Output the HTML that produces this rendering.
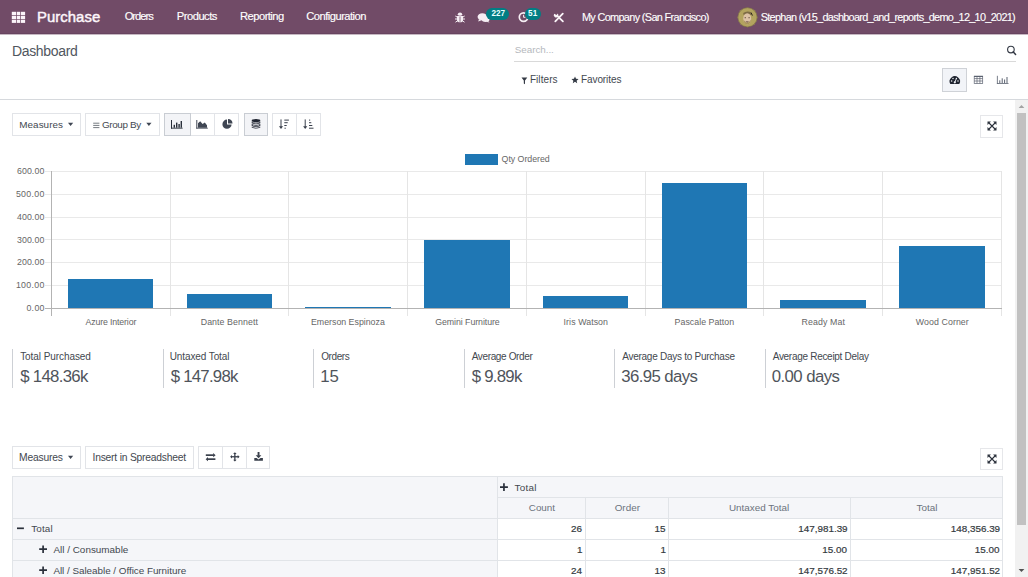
<!DOCTYPE html>
<html><head><meta charset="utf-8"><title>Purchase - Dashboard</title>
<style>
html,body{margin:0;padding:0;}
body{width:1028px;height:577px;overflow:hidden;position:relative;background:#fff;font-family:"Liberation Sans",sans-serif;}
.t{position:absolute;white-space:nowrap;}
.b{position:absolute;box-sizing:border-box;}
svg{position:absolute;overflow:visible;}
</style></head><body>
<div class="b" style="left:0px;top:0px;width:1028px;height:33px;background:#714b67"></div>
<div class="b" style="left:0px;top:33px;width:1028px;height:1px;background:#684460"></div>
<div class="b" style="left:0px;top:34px;width:1028px;height:1px;background:#c6b8c2"></div>
<svg style="left:0;top:0" width="40" height="34"><g fill="#fbf4f9"><rect x="11.8" y="11.8" width="4.3" height="3.3"/><rect x="16.8" y="11.8" width="3.4" height="3.3"/><rect x="20.9" y="11.8" width="4.2" height="3.3"/><rect x="11.8" y="15.8" width="4.3" height="3.5"/><rect x="16.8" y="15.8" width="3.4" height="3.5"/><rect x="20.9" y="15.8" width="4.2" height="3.5"/><rect x="11.8" y="20" width="4.3" height="2.9"/><rect x="16.8" y="20" width="3.4" height="2.9"/><rect x="20.9" y="20" width="4.2" height="2.9"/></g></svg>
<svg style="left:454px;top:11px" width="12" height="13" viewBox="0 0 12 13"><g fill="#f6eef4" stroke="#f6eef4"><ellipse cx="6" cy="3.2" rx="2.2" ry="1.6" stroke="none"/><path d="M3 5 H9 V9.5 Q9 11.3 6 11.3 Q3 11.3 3 9.5 Z" stroke="none"/><path d="M3 6 L1.3 5 M3 8 L1 8 M3.3 10 L1.5 11.2 M9 6 L10.7 5 M9 8 L11 8 M8.7 10 L10.5 11.2" stroke-width="1" fill="none"/></g><path d="M6 5.5 V10.8" stroke="#714b67" stroke-width="0.8"/></svg>
<svg style="left:477px;top:11px" width="14" height="13" viewBox="0 0 14 13"><g fill="#f6eef4"><ellipse cx="5.3" cy="5.8" rx="4.7" ry="3.6"/><path d="M2 8 L1.2 10.6 L4.6 9.2 Z"/><ellipse cx="8.6" cy="8" rx="4" ry="3" /><path d="M11 10 L12.6 11.4 L9.2 10.8 Z"/></g></svg>
<div class="b" style="left:486.2px;top:7.6px;width:22.7px;height:12px;border-radius:6px;background:#017e84"></div>
<svg style="left:517px;top:10px" width="14" height="14" viewBox="0 0 14 14"><circle cx="6.6" cy="7.1" r="4.3" fill="none" stroke="#f6eef4" stroke-width="1.7"/><path d="M6.6 4.8 V7.3 H8.4" fill="none" stroke="#f6eef4" stroke-width="1"/></svg>
<div class="b" style="left:524.6px;top:7.5px;width:16.9px;height:12.2px;border-radius:6px;background:#017e84"></div>
<svg style="left:553px;top:12px" width="12" height="11" viewBox="0 0 12 11"><g stroke="#fbf5f9" stroke-width="1.8" stroke-linecap="round"><path d="M2.3 9.3 L9.8 1.6"/><path d="M4 3.6 L9.9 9.4"/></g><path d="M1.2 1.8 A2.3 2.3 0 1 0 4.6 1.4 L3.8 2.9 L2.6 2.4 Z" fill="#fbf5f9"/></svg>
<svg style="left:737px;top:7px" width="21" height="21" viewBox="0 0 21 21"><circle cx="10.5" cy="10.3" r="9.9" fill="#b3a45f"/><circle cx="10.5" cy="10.3" r="9.6" fill="none" stroke="#6e6340" stroke-width="0.8" opacity="0.7"/><path d="M6.2 6 Q10 3.2 14.6 5.6 L14.2 8 Q10.3 6.3 6.6 8 Z" fill="#7d6b45"/><ellipse cx="10.2" cy="11.8" rx="4" ry="5.6" fill="#dcc2a6"/><path d="M6.4 12.5 Q10.2 19 14 12.5 Q13.6 17.2 10.2 17.6 Q6.8 17.2 6.4 12.5Z" fill="#a8945c"/><rect x="7.6" y="10.3" width="1.4" height="0.9" fill="#5d4a3a"/><rect x="11.4" y="10.3" width="1.4" height="0.9" fill="#5d4a3a"/><path d="M8.3 14.6 Q10.2 16.2 12.1 14.6 Z" fill="#4a3028"/><path d="M14.2 5.8 L15.4 8.6" stroke="#2b2420" stroke-width="1"/></svg>
<div class="b" style="left:0px;top:99px;width:1028px;height:1px;background:#d6d9dd"></div>
<div class="b" style="left:514px;top:61px;width:502px;height:1px;background:#d9d9d9"></div>
<svg style="left:1005px;top:44px" width="13" height="13" viewBox="0 0 13 13"><circle cx="5.9" cy="5.5" r="3.3" fill="none" stroke="#343a45" stroke-width="1.15"/><path d="M8.3 7.9 L10.6 10.4" stroke="#343a45" stroke-width="1.5" stroke-linecap="round"/></svg>
<svg style="left:521px;top:77px" width="7" height="8" viewBox="0 0 7 8"><path d="M0.5 0.5 H6.3 L4 3.4 V7.3 L2.8 6.4 V3.4 Z" fill="#343a45"/></svg>
<svg style="left:571px;top:76px" width="8" height="8" viewBox="0 0 24 24"><path d="M12 1.5 L15.1 8.4 L22.6 9.1 L16.9 14.1 L18.6 21.5 L12 17.6 L5.4 21.5 L7.1 14.1 L1.4 9.1 L8.9 8.4 Z" fill="#343a45"/></svg>
<div class="b" style="left:942px;top:68px;width:25px;height:24px;background:#f2f4f8;border:1px solid #cfd2d7"></div>
<svg style="left:949px;top:76px" width="12" height="9" viewBox="0 0 12 9"><path d="M1.3 8 A5.2 5.2 0 1 1 10.3 8 Z" fill="#1f2430"/><g fill="#f2f4f8"><circle cx="2.6" cy="5" r="0.75"/><circle cx="4" cy="2.4" r="0.75"/><circle cx="7.4" cy="2.4" r="0.75"/><circle cx="9" cy="5" r="0.75"/><circle cx="5.8" cy="6.3" r="1.1"/></g><path d="M5.8 6.3 L7.2 3" stroke="#f2f4f8" stroke-width="0.9"/></svg>
<svg style="left:973px;top:75px" width="11" height="10" viewBox="0 0 11 10"><g fill="none" stroke="#5b6270" stroke-width="0.7"><rect x="1.2" y="1.2" width="8.5" height="7.2"/><path d="M1.2 3.6 H9.7 M1.2 6 H9.7 M4 1.2 V8.4 M6.9 1.2 V8.4"/></g><rect x="1" y="0.9" width="8.9" height="1.1" fill="#5b6270"/></svg>
<svg style="left:996px;top:75px" width="14" height="10" viewBox="0 0 14 10"><g fill="#5b6270"><rect x="0.9" y="0.8" width="0.8" height="8"/><rect x="0.9" y="8" width="11.6" height="0.8"/><rect x="3.3" y="5.3" width="1" height="2.7"/><rect x="5.7" y="3.3" width="1" height="4.7"/><rect x="8.1" y="4.5" width="1" height="3.5"/><rect x="10.5" y="2" width="1" height="6"/></g></svg>
<div class="b" style="left:1015px;top:100px;width:13px;height:477px;background:#f1f1f1"></div>
<div class="b" style="left:1017px;top:113px;width:9px;height:412px;background:#c1c1c1"></div>
<svg style="left:1015px;top:100px" width="13" height="12" viewBox="0 0 13 12"><path d="M3.6 8 L6.5 5 L9.4 8 Z" fill="#a3a3a3"/></svg>
<svg style="left:1015px;top:565px" width="13" height="12" viewBox="0 0 13 12"><path d="M3.6 4 L6.5 7 L9.4 4 Z" fill="#505050"/></svg>
<div class="b" style="left:12px;top:113px;width:69px;height:23px;background:#fff;border:1px solid #e2e4e8"></div>
<svg style="left:67px;top:122px" width="8" height="5" viewBox="0 0 8 5"><path d="M1 0.8 H6.2 L3.6 3.9 Z" fill="#3f4653"/></svg>
<div class="b" style="left:85px;top:113px;width:75px;height:23px;background:#fff;border:1px solid #e2e4e8"></div>
<svg style="left:92px;top:121px" width="9" height="9" viewBox="0 0 9 9"><path d="M1.2 2.2 H7.4 M1.2 4.4 H7.4 M1.2 6.6 H7.4" stroke="#5d636c" stroke-width="0.85"/></svg>
<svg style="left:145px;top:122px" width="8" height="5" viewBox="0 0 8 5"><path d="M1.3 0.8 H6.5 L3.9 3.9 Z" fill="#3f4653"/></svg>
<div class="b" style="left:164px;top:113px;width:75px;height:23px;background:#fff;border:1px solid #e2e4e8"></div>
<div class="b" style="left:164px;top:113px;width:27px;height:23px;background:#f3f4f7;border:1px solid #c9cdd3"></div>
<div class="b" style="left:214px;top:114px;width:1px;height:21px;background:#e2e4e8"></div>
<div class="b" style="left:244px;top:113px;width:24px;height:23px;background:#f3f4f7;border:1px solid #c9cdd3"></div>
<div class="b" style="left:272px;top:113px;width:49px;height:23px;background:#fff;border:1px solid #e2e4e8"></div>
<div class="b" style="left:296px;top:114px;width:1px;height:21px;background:#e2e4e8"></div>
<svg style="left:170px;top:119px" width="14" height="11" viewBox="0 0 14 11"><g fill="#2a303b"><rect x="1" y="1" width="1" height="8.6"/><rect x="1" y="8.7" width="11.6" height="0.9"/><rect x="3.6" y="5.8" width="1.4" height="2.9"/><rect x="6" y="3.6" width="1.4" height="5.1"/><rect x="8.4" y="5" width="1.4" height="3.7"/><rect x="10.6" y="2" width="1.4" height="6.7"/></g></svg>
<svg style="left:195px;top:119px" width="14" height="11" viewBox="0 0 14 11"><g fill="#3f4653"><rect x="1.3" y="1" width="1" height="8.6"/><rect x="1.3" y="8.7" width="11.5" height="0.9"/><path d="M3 8.7 V4.2 L5.2 2.2 L7.6 5 L9.8 3.6 L12 6.3 V8.7 Z"/></g></svg>
<svg style="left:221px;top:118px" width="13" height="12" viewBox="0 0 13 12"><path d="M6 1.6 A4.6 4.6 0 1 0 10.6 6.4 H6 Z" fill="#3f4653"/><path d="M7 1 A4.6 4.6 0 0 1 11.5 5.4 H7 Z" fill="#3f4653"/></svg>
<svg style="left:250px;top:118px" width="12" height="13" viewBox="0 0 12 13"><g fill="#1f2430"><ellipse cx="6" cy="2.6" rx="4.3" ry="1.5"/><path d="M1.7 3.4 Q6 5.4 10.3 3.4 V5.3 Q6 7.3 1.7 5.3 Z"/><path d="M1.7 6.1 Q6 8.1 10.3 6.1 V8 Q6 10 1.7 8 Z"/><path d="M1.7 8.8 Q6 10.8 10.3 8.8 V9.6 Q6 11.6 1.7 9.6 Z"/></g><g fill="none" stroke="#f3f4f7" stroke-width="0.6"><path d="M2.6 4.6 Q6 6.2 9.4 4.6"/><path d="M2.6 7.3 Q6 8.9 9.4 7.3"/></g></svg>
<svg style="left:278px;top:118px" width="13" height="12" viewBox="0 0 13 12"><g fill="#3a404c"><rect x="2.5" y="1.4" width="1" height="8"/><path d="M0.9 8.2 H5.1 L3 11 Z"/><rect x="6.3" y="1.6" width="4.6" height="1"/><rect x="6.3" y="4.2" width="3.4" height="1"/><rect x="6.3" y="7" width="2.4" height="1"/><rect x="6.5" y="9.7" width="1.3" height="1"/></g></svg>
<svg style="left:302px;top:118px" width="13" height="12" viewBox="0 0 13 12"><g fill="#3a404c"><rect x="2.7" y="1.4" width="1" height="8"/><path d="M1.1 8.2 H5.3 L3.2 11 Z"/><rect x="7" y="1.6" width="1.2" height="1"/><rect x="7" y="4.2" width="2.3" height="1"/><rect x="7" y="7" width="3.3" height="1"/><rect x="7" y="9.7" width="4.5" height="1"/></g></svg>
<div class="b" style="left:980px;top:115px;width:23px;height:23px;background:#fff;border:1px solid #e6e7ea"></div>
<svg style="left:985.6px;top:119.9px" width="12" height="12" viewBox="0 0 12 12"><g stroke="#2a303b" stroke-width="1.1" fill="none"><path d="M3 3 L9 9 M9 3 L3 9"/></g><g fill="#2a303b"><path d="M1.5 1.5 H4.9 L1.5 4.9 Z"/><path d="M10.5 1.5 H7.1 L10.5 4.9 Z"/><path d="M1.5 10.5 H4.9 L1.5 7.1 Z"/><path d="M10.5 10.5 H7.1 L10.5 7.1 Z"/></g></svg>
<svg style="left:0;top:0" width="1015" height="340" viewBox="0 0 1015 340" shape-rendering="crispEdges"><rect x="465" y="153.6" width="32.5" height="11.4" fill="#1f77b4"/><rect x="44.5" y="170.80" width="957" height="1" fill="#e9e9e9"/><rect x="44.5" y="193.65" width="957" height="1" fill="#e9e9e9"/><rect x="44.5" y="216.50" width="957" height="1" fill="#e9e9e9"/><rect x="44.5" y="239.35" width="957" height="1" fill="#e9e9e9"/><rect x="44.5" y="262.20" width="957" height="1" fill="#e9e9e9"/><rect x="44.5" y="285.05" width="957" height="1" fill="#e9e9e9"/><rect x="169.55" y="170.8" width="1" height="145" fill="#e5e5e5"/><rect x="288.30" y="170.8" width="1" height="145" fill="#e5e5e5"/><rect x="407.05" y="170.8" width="1" height="145" fill="#e5e5e5"/><rect x="525.80" y="170.8" width="1" height="145" fill="#e5e5e5"/><rect x="644.55" y="170.8" width="1" height="145" fill="#e5e5e5"/><rect x="763.30" y="170.8" width="1" height="145" fill="#e5e5e5"/><rect x="882.05" y="170.8" width="1" height="145" fill="#e5e5e5"/><rect x="1000.80" y="170.8" width="1" height="145" fill="#e5e5e5"/><rect x="44.5" y="307.9" width="957" height="1" fill="#b3b3b3"/><rect x="50.8" y="170.8" width="1" height="145" fill="#b3b3b3"/><rect x="67.90" y="278.70" width="85.5" height="29.70" fill="#1f77b4"/><rect x="186.65" y="293.90" width="85.5" height="14.50" fill="#1f77b4"/><rect x="305.40" y="306.80" width="85.5" height="1.60" fill="#1f77b4"/><rect x="424.15" y="239.60" width="85.5" height="68.80" fill="#1f77b4"/><rect x="542.90" y="295.70" width="85.5" height="12.70" fill="#1f77b4"/><rect x="661.65" y="182.60" width="85.5" height="125.80" fill="#1f77b4"/><rect x="780.40" y="299.90" width="85.5" height="8.50" fill="#1f77b4"/><rect x="899.15" y="246.30" width="85.5" height="62.10" fill="#1f77b4"/></svg>
<div class="b" style="left:12px;top:349px;width:1px;height:39px;background:#cdd0d5"></div>
<div class="b" style="left:163px;top:349px;width:1px;height:39px;background:#cdd0d5"></div>
<div class="b" style="left:313px;top:349px;width:1px;height:39px;background:#cdd0d5"></div>
<div class="b" style="left:464px;top:349px;width:1px;height:39px;background:#cdd0d5"></div>
<div class="b" style="left:614px;top:349px;width:1px;height:39px;background:#cdd0d5"></div>
<div class="b" style="left:765px;top:349px;width:1px;height:39px;background:#cdd0d5"></div>
<div class="b" style="left:12px;top:446px;width:69px;height:23px;background:#fff;border:1px solid #e2e4e8"></div>
<svg style="left:67px;top:455px" width="8" height="5" viewBox="0 0 8 5"><path d="M1 0.8 H6.2 L3.6 3.9 Z" fill="#3f4653"/></svg>
<div class="b" style="left:85px;top:446px;width:109px;height:23px;background:#fff;border:1px solid #e2e4e8"></div>
<div class="b" style="left:198px;top:446px;width:72px;height:23px;background:#fff;border:1px solid #e2e4e8"></div>
<div class="b" style="left:222px;top:447px;width:1px;height:21px;background:#e2e4e8"></div>
<div class="b" style="left:246px;top:447px;width:1px;height:21px;background:#e2e4e8"></div>
<svg style="left:204px;top:451px" width="13" height="11" viewBox="0 0 13 11"><g fill="#3a404c"><rect x="1.8" y="3.3" width="8" height="1.7"/><path d="M9.2 2 L11.6 4.15 L9.2 6.3 Z"/><rect x="3.4" y="7.3" width="8" height="1.7"/><path d="M4 6 L1.6 8.15 L4 10.3 Z"/></g></svg>
<svg style="left:229px;top:451px" width="12" height="12" viewBox="0 0 12 12"><g fill="#3a404c"><rect x="5.2" y="2" width="1.3" height="7.5"/><rect x="2" y="5.1" width="7.5" height="1.3"/><path d="M5.85 1.2 L7.6 3 H4.1 Z"/><path d="M5.85 10.6 L7.6 8.7 H4.1 Z"/><path d="M1.1 5.75 L3 4 V7.5 Z"/><path d="M10.6 5.75 L8.7 4 V7.5 Z"/></g></svg>
<svg style="left:253px;top:451px" width="12" height="12" viewBox="0 0 12 12"><g fill="#3a404c"><rect x="4.6" y="1" width="1.9" height="3.8"/><path d="M2.7 4.3 H8.4 L5.55 7.3 Z"/><path d="M1.3 6.9 H3.6 L5.55 8.6 L7.5 6.9 H9.9 V9.7 H1.3 Z"/></g></svg>
<div class="b" style="left:980px;top:448px;width:23px;height:22px;background:#fff;border:1px solid #e6e7ea"></div>
<svg style="left:985.6px;top:452.9px" width="12" height="12" viewBox="0 0 12 12"><g stroke="#2a303b" stroke-width="1.1" fill="none"><path d="M3 3 L9 9 M9 3 L3 9"/></g><g fill="#2a303b"><path d="M1.5 1.5 H4.9 L1.5 4.9 Z"/><path d="M10.5 1.5 H7.1 L10.5 4.9 Z"/><path d="M1.5 10.5 H4.9 L1.5 7.1 Z"/><path d="M10.5 10.5 H7.1 L10.5 7.1 Z"/></g></svg>
<div class="b" style="left:12px;top:476px;width:486px;height:43px;background:#f5f6f9;border:1px solid #e1e4e8"></div>
<div class="b" style="left:497px;top:476px;width:506px;height:22px;background:#f5f6f9;border:1px solid #e1e4e8"></div>
<div class="b" style="left:497px;top:497px;width:89px;height:22px;background:#f5f6f9;border:1px solid #e1e4e8"></div>
<div class="b" style="left:585px;top:497px;width:84px;height:22px;background:#f5f6f9;border:1px solid #e1e4e8"></div>
<div class="b" style="left:668px;top:497px;width:183px;height:22px;background:#f5f6f9;border:1px solid #e1e4e8"></div>
<div class="b" style="left:850px;top:497px;width:153px;height:22px;background:#f5f6f9;border:1px solid #e1e4e8"></div>
<div class="b" style="left:12px;top:518px;width:486px;height:22px;background:#f5f6f9;border:1px solid #e1e4e8"></div>
<div class="b" style="left:497px;top:518px;width:89px;height:22px;background:#fff;border:1px solid #e1e4e8"></div>
<div class="b" style="left:585px;top:518px;width:84px;height:22px;background:#fff;border:1px solid #e1e4e8"></div>
<div class="b" style="left:668px;top:518px;width:183px;height:22px;background:#fff;border:1px solid #e1e4e8"></div>
<div class="b" style="left:850px;top:518px;width:153px;height:22px;background:#fff;border:1px solid #e1e4e8"></div>
<div class="b" style="left:12px;top:539px;width:486px;height:22px;background:#f5f6f9;border:1px solid #e1e4e8"></div>
<div class="b" style="left:497px;top:539px;width:89px;height:22px;background:#fff;border:1px solid #e1e4e8"></div>
<div class="b" style="left:585px;top:539px;width:84px;height:22px;background:#fff;border:1px solid #e1e4e8"></div>
<div class="b" style="left:668px;top:539px;width:183px;height:22px;background:#fff;border:1px solid #e1e4e8"></div>
<div class="b" style="left:850px;top:539px;width:153px;height:22px;background:#fff;border:1px solid #e1e4e8"></div>
<div class="b" style="left:12px;top:560px;width:486px;height:22px;background:#f5f6f9;border:1px solid #e1e4e8"></div>
<div class="b" style="left:497px;top:560px;width:89px;height:22px;background:#fff;border:1px solid #e1e4e8"></div>
<div class="b" style="left:585px;top:560px;width:84px;height:22px;background:#fff;border:1px solid #e1e4e8"></div>
<div class="b" style="left:668px;top:560px;width:183px;height:22px;background:#fff;border:1px solid #e1e4e8"></div>
<div class="b" style="left:850px;top:560px;width:153px;height:22px;background:#fff;border:1px solid #e1e4e8"></div>
<svg style="left:498px;top:481px" width="12" height="12" viewBox="0 0 12 12"><path d="M2 6.1 H9.9 M5.95 2.2 V10" stroke="#2a303b" stroke-width="1.7"/></svg>
<svg style="left:15px;top:522px" width="12" height="12" viewBox="0 0 12 12"><path d="M2 6.3 H8.9" stroke="#2a303b" stroke-width="1.7"/></svg>
<svg style="left:37px;top:543px" width="12" height="12" viewBox="0 0 12 12"><path d="M2.2 6.2 H10 M6.1 2.5 V9.9" stroke="#2a303b" stroke-width="1.7"/></svg>
<svg style="left:37px;top:564px" width="12" height="12" viewBox="0 0 12 12"><path d="M2.2 6.2 H10 M6.1 2.5 V9.9" stroke="#2a303b" stroke-width="1.7"/></svg>
<div class="t" style="left:37px;top:10px;font-size:14.9px;line-height:14.9px;color:#fdf6fb;letter-spacing:0.04px;-webkit-text-stroke:0.45px #fdf6fb">Purchase</div>
<div class="t" style="left:124.7px;top:11px;font-size:11.2px;line-height:11.2px;color:#ffffff;letter-spacing:-1.02px;-webkit-text-stroke:0.15px #ffffff">Orders</div>
<div class="t" style="left:176.8px;top:11px;font-size:11.2px;line-height:11.2px;color:#ffffff;letter-spacing:-0.51px;-webkit-text-stroke:0.15px #ffffff">Products</div>
<div class="t" style="left:240.1px;top:11px;font-size:11.2px;line-height:11.2px;color:#ffffff;letter-spacing:-0.55px;-webkit-text-stroke:0.15px #ffffff">Reporting</div>
<div class="t" style="left:306.3px;top:11px;font-size:11.2px;line-height:11.2px;color:#ffffff;letter-spacing:-0.53px;-webkit-text-stroke:0.15px #ffffff">Configuration</div>
<div class="t" style="left:581.9px;top:12px;font-size:10.9px;line-height:10.9px;color:#ffffff;letter-spacing:-0.66px;-webkit-text-stroke:0.12px #ffffff">My Company (San Francisco)</div>
<div class="t" style="left:760.7px;top:12px;font-size:10.9px;line-height:10.9px;color:#ffffff;letter-spacing:-0.7px;-webkit-text-stroke:0.12px #ffffff">Stephan (v15_dashboard_and_reports_demo_12_10_2021)</div>
<div class="t" style="left:491.4px;top:10px;font-size:8.2px;line-height:8.2px;color:#e8ffff;font-weight:700;letter-spacing:-0.05px">227</div>
<div class="t" style="left:528.1px;top:10px;font-size:8.2px;line-height:8.2px;color:#e8ffff;font-weight:700">51</div>
<div class="t" style="left:11.9px;top:44px;font-size:14px;line-height:14px;color:#50565e;letter-spacing:-0.32px">Dashboard</div>
<div class="t" style="left:514.8px;top:45px;font-size:9.9px;line-height:9.9px;color:#b5b8bd;letter-spacing:-0.06px">Search...</div>
<div class="t" style="left:529.9px;top:75px;font-size:10px;line-height:10px;color:#43484f;letter-spacing:0.07px">Filters</div>
<div class="t" style="left:581px;top:75px;font-size:10px;line-height:10px;color:#43484f;letter-spacing:-0.09px">Favorites</div>
<div class="t" style="left:19.3px;top:120px;font-size:9.9px;line-height:9.9px;color:#43484f;letter-spacing:0.04px">Measures</div>
<div class="t" style="left:102px;top:120px;font-size:9.9px;line-height:9.9px;color:#43484f;letter-spacing:-0.37px">Group By</div>
<div class="t" style="left:501.6px;top:155px;font-size:8.8px;line-height:8.8px;color:#666666;letter-spacing:-0.03px">Qty Ordered</div>
<div class="t" style="left:16.9px;top:167px;font-size:8.8px;line-height:8.8px;color:#666666;letter-spacing:0.1px">600.00</div>
<div class="t" style="left:15.9px;top:190px;font-size:8.8px;line-height:8.8px;color:#666666;letter-spacing:0.3px">500.00</div>
<div class="t" style="left:16.9px;top:213px;font-size:8.8px;line-height:8.8px;color:#666666;letter-spacing:0.1px">400.00</div>
<div class="t" style="left:16.9px;top:236px;font-size:8.8px;line-height:8.8px;color:#666666;letter-spacing:0.1px">300.00</div>
<div class="t" style="left:16.9px;top:258px;font-size:8.8px;line-height:8.8px;color:#666666;letter-spacing:0.1px">200.00</div>
<div class="t" style="left:15.9px;top:281px;font-size:8.8px;line-height:8.8px;color:#666666;letter-spacing:0.3px">100.00</div>
<div class="t" style="left:26.4px;top:304px;font-size:8.8px;line-height:8.8px;color:#666666;letter-spacing:0.33px">0.00</div>
<div class="t" style="left:85.47px;top:318px;font-size:8.8px;line-height:8.8px;color:#666666;letter-spacing:-0.15px">Azure Interior</div>
<div class="t" style="left:200.73px;top:318px;font-size:8.8px;line-height:8.8px;color:#666666;letter-spacing:0.08px">Dante Bennett</div>
<div class="t" style="left:310.98px;top:318px;font-size:8.8px;line-height:8.8px;color:#666666">Emerson Espinoza</div>
<div class="t" style="left:435.28px;top:318px;font-size:8.8px;line-height:8.8px;color:#666666;letter-spacing:-0.07px">Gemini Furniture</div>
<div class="t" style="left:563.62px;top:318px;font-size:8.8px;line-height:8.8px;color:#666666;letter-spacing:0.07px">Iris Watson</div>
<div class="t" style="left:674.62px;top:318px;font-size:8.8px;line-height:8.8px;color:#666666;letter-spacing:0.02px">Pascale Patton</div>
<div class="t" style="left:801.62px;top:318px;font-size:8.8px;line-height:8.8px;color:#666666;letter-spacing:0.09px">Ready Mat</div>
<div class="t" style="left:915.82px;top:318px;font-size:8.8px;line-height:8.8px;color:#666666;letter-spacing:0.08px">Wood Corner</div>
<div class="t" style="left:20.2px;top:352px;font-size:10px;line-height:10px;color:#43484f;letter-spacing:-0.07px">Total Purchased</div>
<div class="t" style="left:20.2px;top:369px;font-size:16.8px;line-height:16.8px;color:#4f545b;letter-spacing:-0.7px">$ 148.36k</div>
<div class="t" style="left:169.7px;top:352px;font-size:10px;line-height:10px;color:#43484f;letter-spacing:-0.1px">Untaxed Total</div>
<div class="t" style="left:170.7px;top:369px;font-size:16.8px;line-height:16.8px;color:#4f545b;letter-spacing:-0.75px">$ 147.98k</div>
<div class="t" style="left:321.2px;top:352px;font-size:10px;line-height:10px;color:#43484f;letter-spacing:-0.4px">Orders</div>
<div class="t" style="left:320.2px;top:369px;font-size:16.8px;line-height:16.8px;color:#4f545b">15</div>
<div class="t" style="left:471.7px;top:352px;font-size:10px;line-height:10px;color:#43484f;letter-spacing:-0.36px">Average Order</div>
<div class="t" style="left:471.7px;top:369px;font-size:16.8px;line-height:16.8px;color:#4f545b;letter-spacing:-0.73px">$ 9.89k</div>
<div class="t" style="left:622.2px;top:352px;font-size:10px;line-height:10px;color:#43484f;letter-spacing:-0.26px">Average Days to Purchase</div>
<div class="t" style="left:621.2px;top:369px;font-size:16.8px;line-height:16.8px;color:#4f545b;letter-spacing:-0.61px">36.95 days</div>
<div class="t" style="left:772.7px;top:352px;font-size:10px;line-height:10px;color:#43484f;letter-spacing:-0.29px">Average Receipt Delay</div>
<div class="t" style="left:771.7px;top:369px;font-size:16.8px;line-height:16.8px;color:#4f545b;letter-spacing:-0.57px">0.00 days</div>
<div class="t" style="left:19.1px;top:453px;font-size:10.3px;line-height:10.3px;color:#43484f;letter-spacing:-0.19px">Measures</div>
<div class="t" style="left:92.5px;top:453px;font-size:10.3px;line-height:10.3px;color:#43484f;letter-spacing:-0.21px">Insert in Spreadsheet</div>
<div class="t" style="left:514.5px;top:483px;font-size:9.9px;line-height:9.9px;color:#43484f;letter-spacing:0.3px">Total</div>
<div class="t" style="left:528.75px;top:503px;font-size:9.9px;line-height:9.9px;color:#6c737d">Count</div>
<div class="t" style="left:614.7px;top:503px;font-size:9.9px;line-height:9.9px;color:#6c737d">Order</div>
<div class="t" style="left:728.9px;top:503px;font-size:9.9px;line-height:9.9px;color:#6c737d">Untaxed Total</div>
<div class="t" style="left:916.6px;top:503px;font-size:9.9px;line-height:9.9px;color:#6c737d">Total</div>
<div class="t" style="left:31.2px;top:524px;font-size:9.9px;line-height:9.9px;color:#43484f;letter-spacing:0.17px">Total</div>
<div class="t" style="left:53.4px;top:545px;font-size:9.9px;line-height:9.9px;color:#43484f;letter-spacing:0.02px">All / Consumable</div>
<div class="t" style="left:53.4px;top:566px;font-size:9.9px;line-height:9.9px;color:#43484f;letter-spacing:-0.03px">All / Saleable / Office Furniture</div>
<div class="t" style="left:571px;top:524px;font-size:9.9px;line-height:9.9px;color:#343a40;-webkit-text-stroke:0.2px #343a40">26</div>
<div class="t" style="left:654.5px;top:524px;font-size:9.9px;line-height:9.9px;color:#343a40;-webkit-text-stroke:0.2px #343a40">15</div>
<div class="t" style="left:798.2px;top:524px;font-size:9.9px;line-height:9.9px;color:#343a40;-webkit-text-stroke:0.2px #343a40">147,981.39</div>
<div class="t" style="left:950.7px;top:524px;font-size:9.9px;line-height:9.9px;color:#343a40;-webkit-text-stroke:0.2px #343a40">148,356.39</div>
<div class="t" style="left:577px;top:545px;font-size:9.9px;line-height:9.9px;color:#343a40;-webkit-text-stroke:0.2px #343a40">1</div>
<div class="t" style="left:660.5px;top:545px;font-size:9.9px;line-height:9.9px;color:#343a40;-webkit-text-stroke:0.2px #343a40">1</div>
<div class="t" style="left:822.2px;top:545px;font-size:9.9px;line-height:9.9px;color:#343a40;-webkit-text-stroke:0.2px #343a40">15.00</div>
<div class="t" style="left:974.7px;top:545px;font-size:9.9px;line-height:9.9px;color:#343a40;-webkit-text-stroke:0.2px #343a40">15.00</div>
<div class="t" style="left:571px;top:566px;font-size:9.9px;line-height:9.9px;color:#343a40;-webkit-text-stroke:0.2px #343a40">24</div>
<div class="t" style="left:654.5px;top:566px;font-size:9.9px;line-height:9.9px;color:#343a40;-webkit-text-stroke:0.2px #343a40">13</div>
<div class="t" style="left:798.2px;top:566px;font-size:9.9px;line-height:9.9px;color:#343a40;-webkit-text-stroke:0.2px #343a40">147,576.52</div>
<div class="t" style="left:950.7px;top:566px;font-size:9.9px;line-height:9.9px;color:#343a40;-webkit-text-stroke:0.2px #343a40">147,951.52</div>
</body></html>
